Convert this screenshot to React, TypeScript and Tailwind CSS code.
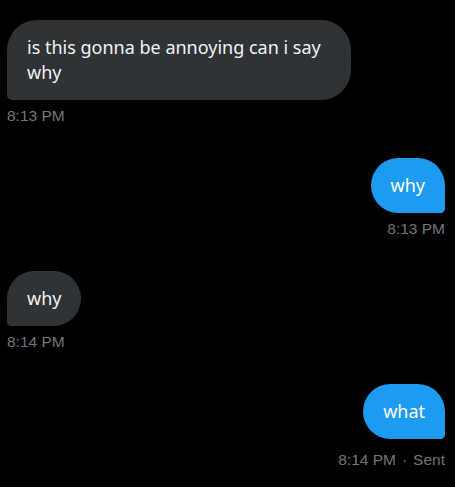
export default function App() {
  const bubble = "px-[20px] py-[15px] text-[18px] leading-[25px] font-['Segoe_UI','Noto_Sans',sans-serif]";
  const ts = "text-[15.5px] leading-[20px] text-[#71767b] font-['Liberation_Sans',Arial,sans-serif]";
  return (
    <div className="w-[455px] h-[487px] bg-black overflow-hidden pl-[7px] pr-[10px] pt-[20px] flex flex-col">
      <div className="flex flex-col items-start pb-[32px]">
        <div className={`max-w-[344px] bg-[#2f3336] text-[#f1f2f3] rounded-[30px] rounded-bl-[5px] ${bubble}`}>
          is this gonna be annoying can i say why
        </div>
        <div className={`mt-[6px] ${ts}`}>8:13 PM</div>
      </div>
      <div className="flex flex-col items-end pb-[32px]">
        <div className={`bg-[#1d9bf0] text-white rounded-[30px] rounded-br-[5px] ${bubble}`}>why</div>
        <div className={`mt-[6px] ${ts}`}>8:13 PM</div>
      </div>
      <div className="flex flex-col items-start pb-[32px]">
        <div className={`bg-[#2f3336] text-[#f1f2f3] rounded-[30px] rounded-bl-[5px] ${bubble}`}>why</div>
        <div className={`mt-[6px] ${ts}`}>8:14 PM</div>
      </div>
      <div className="flex flex-col items-end">
        <div className={`bg-[#1d9bf0] text-white rounded-[30px] rounded-br-[5px] ${bubble}`}>what</div>
        <div className={`mt-[11px] flex ${ts}`}>
          <span>8:14 PM</span>
          <span className="px-[6px]">·</span>
          <span>Sent</span>
        </div>
      </div>
    </div>
  );
}
